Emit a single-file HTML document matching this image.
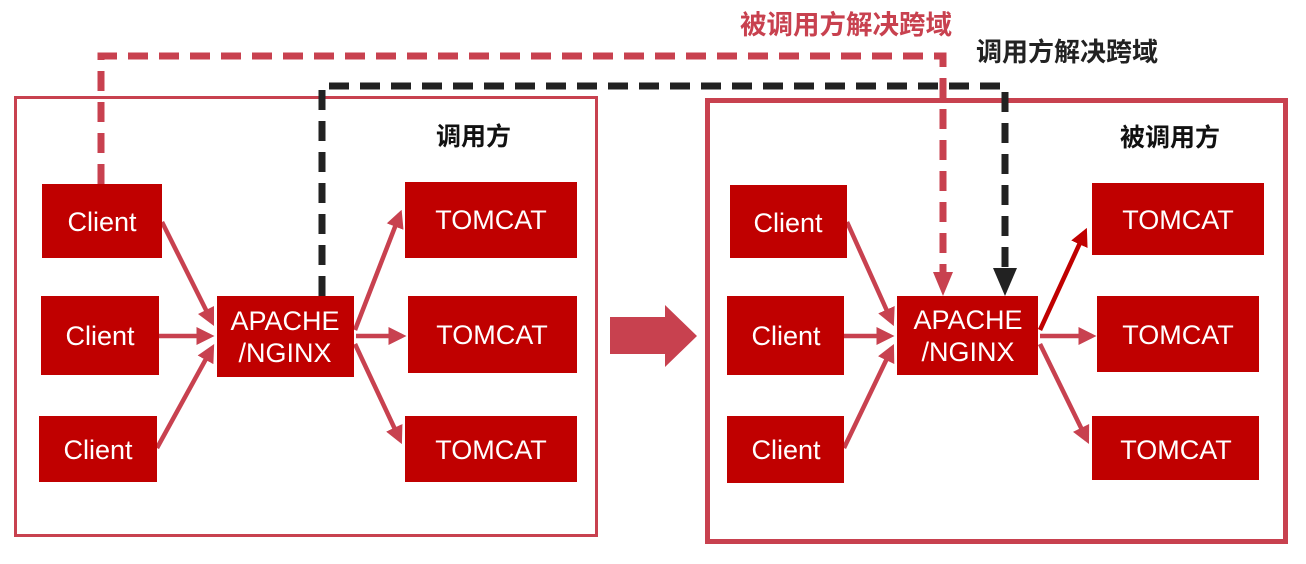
<!DOCTYPE html>
<html><head><meta charset="utf-8"><style>
body{margin:0;background:#fff;width:1306px;height:559px;overflow:hidden}
svg text{font-family:"Liberation Sans","Noto Sans CJK SC",sans-serif}
</style></head><body>
<svg width="1306" height="559" viewBox="0 0 1306 559" xmlns="http://www.w3.org/2000/svg">
<defs>
<marker id="ah" markerWidth="4" markerHeight="4" refX="3" refY="2" orient="auto" markerUnits="strokeWidth"><path d="M0,0 L4,2 L0,4 Z" fill="#c8414f"/></marker>
<marker id="ahd" markerWidth="4" markerHeight="4" refX="3" refY="2" orient="auto" markerUnits="strokeWidth"><path d="M0,0 L4,2 L0,4 Z" fill="#c00000"/></marker>
</defs>
<rect x="15.5" y="97.5" width="581" height="438" fill="none" stroke="#c8414f" stroke-width="3"/>
<rect x="707.5" y="100.5" width="578" height="441" fill="none" stroke="#c8414f" stroke-width="5"/>
<path d="M101,184 V56 H943 V272" fill="none" stroke="#c8414f" stroke-width="7" stroke-dasharray="20,11"/>
<path d="M943,296 L933,272 L953,272 Z" fill="#c8414f"/>
<path d="M322,296 V86 H1005 V270" fill="none" stroke="#222" stroke-width="7" stroke-dasharray="20,11"/>
<path d="M1005,296 L993,268 L1017,268 Z" fill="#222"/>
<path d="M610,317 H665 V305 L697,336 L665,367 V354 H610 Z" fill="#c8414f"/>
<g stroke-width="4.5" fill="none">
<g stroke="#c8414f" marker-end="url(#ah)">
<line x1="162" y1="222" x2="212" y2="322"/>
<line x1="159" y1="336" x2="210" y2="336"/>
<line x1="157" y1="448" x2="212" y2="348"/>
<line x1="355" y1="330" x2="400" y2="214"/>
<line x1="356" y1="336" x2="402" y2="336"/>
<line x1="355" y1="344" x2="400" y2="440"/>
<line x1="847" y1="222" x2="892" y2="322"/>
<line x1="844" y1="336" x2="890" y2="336"/>
<line x1="844" y1="448" x2="892" y2="348"/>
<line x1="1040" y1="336" x2="1092" y2="336"/>
<line x1="1040" y1="344" x2="1087" y2="440"/>
</g>
<line x1="1040" y1="330" x2="1085" y2="232" stroke="#c00000" marker-end="url(#ahd)"/>
</g>
<g fill="#c00000">
<rect x="42" y="184" width="120" height="74"/>
<rect x="41" y="296" width="118" height="79"/>
<rect x="39" y="416" width="118" height="66"/>
<rect x="217" y="296" width="137" height="81"/>
<rect x="405" y="182" width="172" height="76"/>
<rect x="408" y="296" width="169" height="77"/>
<rect x="405" y="416" width="172" height="66"/>
<rect x="730" y="185" width="117" height="73"/>
<rect x="727" y="296" width="117" height="79"/>
<rect x="727" y="416" width="117" height="67"/>
<rect x="897" y="296" width="141" height="79"/>
<rect x="1092" y="183" width="172" height="72"/>
<rect x="1097" y="296" width="162" height="76"/>
<rect x="1092" y="416" width="167" height="64"/>
</g>
<g fill="#fff" font-size="27" text-anchor="middle">
<text x="102" y="231">Client</text>
<text x="100" y="345">Client</text>
<text x="98" y="459">Client</text>
<text x="285" y="330">APACHE</text>
<text x="285" y="362">/NGINX</text>
<text x="491" y="229">TOMCAT</text>
<text x="492" y="344">TOMCAT</text>
<text x="491" y="459">TOMCAT</text>
<text x="788" y="232">Client</text>
<text x="786" y="345">Client</text>
<text x="786" y="459">Client</text>
<text x="968" y="329">APACHE</text>
<text x="968" y="361">/NGINX</text>
<text x="1178" y="229">TOMCAT</text>
<text x="1178" y="344">TOMCAT</text>
<text x="1176" y="459">TOMCAT</text>
</g>
<g font-weight="bold" font-size="25">
<text x="436" y="145" fill="#111">调用方</text>
<text x="1120" y="146" fill="#111">被调用方</text>
<text x="740" y="34" fill="#c8414f" font-size="26.5">被调用方解决跨域</text>
<text x="976" y="61" fill="#222" font-size="26">调用方解决跨域</text>
</g>
</svg>
</body></html>
